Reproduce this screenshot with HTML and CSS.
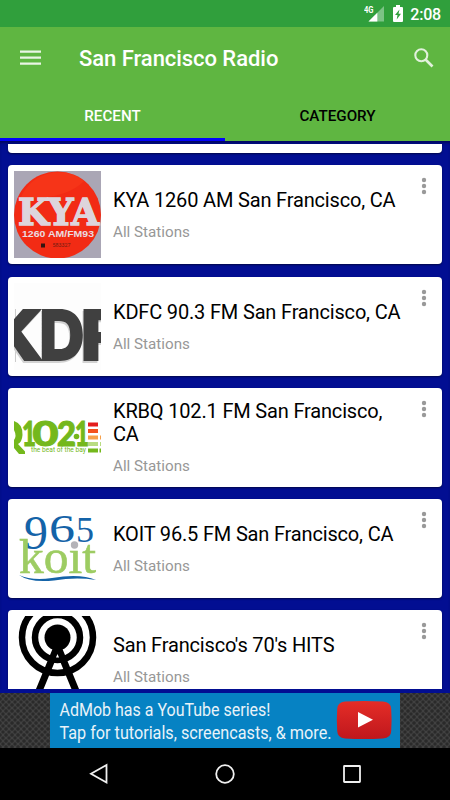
FILE: index.html
```html
<!DOCTYPE html>
<html lang="en">
<head>
    <meta charset="UTF-8">
    <meta name="viewport" content="width=device-width, initial-scale=1.0">
    <title>San Francisco Radio</title>
    <link rel="stylesheet" href="styles.css">
</head>
<body>

    <div class="status-bar">
        <svg class="signal" width="20" height="16" viewBox="0 0 20 16">
            <path d="M20 0V15.500H4.500z" fill="#7cc386"/>
            <path d="M13.300 6.700V15.500H4.500z" fill="#fff"/>
            <path d="M0 0H11V8H0z" fill="#309f3c"/>
            <text x="0" y="7" textLength="9.500" lengthAdjust="spacingAndGlyphs" class="network">4G</text>
        </svg>
        <svg class="battery" width="10" height="17" viewBox="0 0 10 17">
            <path d="M3 0h4v2h2q1 0 1 1v13q0 1-1 1H1q-1 0-1-1V3q0-1 1-1h2z" fill="#fff"/>
            <path d="M6.500 4.500L2 10h2.500l-.8 4.500L8 8.800H5.500z" fill="#309f3c"/>
        </svg>
        <span class="clock">2:08</span>
    </div>

    <header class="app-bar">
        <div class="toolbar">
            <svg class="menu-icon" width="22" height="16" viewBox="0 0 22 16">
                <path d="M0 1.700h21M0 7.700h21M0 13.700h21" stroke="#e9f5e4" stroke-width="2.200"/>
            </svg>
            <h1>San Francisco Radio</h1>
            <svg class="search-icon" width="20" height="20" viewBox="0 0 20 20">
                <circle cx="7.300" cy="7.300" r="6" fill="none" stroke="#e2f1dc" stroke-width="2.100"/>
                <path d="M11.500 11.500l7 7" stroke="#e2f1dc" stroke-width="2.600"/>
            </svg>
        </div>
        <nav class="tabs">
            <div class="tab active">RECENT</div>
            <div class="tab">CATEGORY</div>
        </nav>
    </header>

    <main class="stations">
        <div class="card card-end"></div>

        <div class="card">
            <svg class="logo" viewBox="0 0 87 87">
                <rect width="87" height="87" fill="#aaa6b5"/>
                <circle cx="43.500" cy="44" r="43.500" fill="#f22b14"/>
                <path d="M7 26A41 41 0 0 1 70 10Q50 30 7 26z" fill="#f83a1b" opacity=".6"/>
                <text x="4" y="54" textLength="81" lengthAdjust="spacingAndGlyphs" class="kya">KYA</text>
                <text x="8" y="66" textLength="72" lengthAdjust="spacingAndGlyphs" class="kya-sub">1260 AM/FM93</text>
                <rect x="27" y="72.500" width="4" height="4" fill="#331410"/>
                <text x="38.500" y="76" textLength="18" lengthAdjust="spacingAndGlyphs" class="kya-num">583327</text>
            </svg>
            <div class="info">
                <h2>KYA 1260 AM San Francisco, CA</h2>
                <p>All Stations</p>
            </div>
            <svg class="more" width="6" height="18" viewBox="0 0 6 18"><circle cx="3" cy="3" r="2.200"/><circle cx="3" cy="9" r="2.200"/><circle cx="3" cy="15" r="2.200"/></svg>
        </div>

        <div class="card">
            <svg class="logo" viewBox="0 0 87 87">
                <rect width="87" height="87" fill="#fdfdfd"/>
                <path d="M1.500 26V79" stroke="#ccc"/>
                <g class="kdf">
                    <text x="-31" y="77.500" textLength="62" lengthAdjust="spacingAndGlyphs">K</text>
                    <text x="25" y="77.500" textLength="46" lengthAdjust="spacingAndGlyphs">D</text>
                    <text x="66" y="77.500" textLength="44" lengthAdjust="spacingAndGlyphs">F</text>
                </g>
            </svg>
            <div class="info">
                <h2>KDFC 90.3 FM San Francisco, CA</h2>
                <p>All Stations</p>
            </div>
            <svg class="more" width="6" height="18" viewBox="0 0 6 18"><circle cx="3" cy="3" r="2.200"/><circle cx="3" cy="9" r="2.200"/><circle cx="3" cy="15" r="2.200"/></svg>
        </div>

        <div class="card">
            <svg class="logo" viewBox="0 0 87 87">
                <path d="M0 27Q9 30 8.500 41Q8 48 4 50L11 57.500V60H5L0 54V46Q3 42 0 36z" fill="#74b81c"/>
                <g class="q102">
                    <text x="8" y="52" textLength="14" lengthAdjust="spacingAndGlyphs">1</text>
                    <text x="18.500" y="52" textLength="26" lengthAdjust="spacingAndGlyphs">0</text>
                    <text x="43" y="52" textLength="19" lengthAdjust="spacingAndGlyphs">2</text>
                    <text x="61" y="52" textLength="14" lengthAdjust="spacingAndGlyphs">1</text>
                </g>
                <circle cx="62.500" cy="42.500" r="2.800" fill="#74b81c"/>
                <text x="17" y="58" textLength="55" lengthAdjust="spacingAndGlyphs" class="q102-sub">the beat of the bay</text>
                <rect x="74" y="28.500" width="10" height="4" fill="#e41e1e"/>
                <rect x="74" y="35" width="10" height="4" fill="#f4511e"/>
                <rect x="74" y="41.500" width="10" height="4" fill="#f7a04b"/>
                <rect x="74" y="48" width="10" height="4" fill="#b9dc82"/>
                <rect x="74" y="54.500" width="10" height="4" fill="#74b81c"/>
                <path d="M86 41.500h1v4h-1z" fill="#f7a04b"/>
                <path d="M86 48h1v4h-1z" fill="#b9dc82"/>
                <path d="M85.500 54.500H87v4h-1.500z" fill="#74b81c"/>
            </svg>
            <div class="info">
                <h2>KRBQ 102.1 FM San Francisco, CA</h2>
                <p>All Stations</p>
            </div>
            <svg class="more" width="6" height="18" viewBox="0 0 6 18"><circle cx="3" cy="3" r="2.200"/><circle cx="3" cy="9" r="2.200"/><circle cx="3" cy="15" r="2.200"/></svg>
        </div>

        <div class="card">
            <svg class="logo" viewBox="0 0 87 87">
                <g class="koit-num">
                    <text x="10" y="44" class="nine">9</text>
                    <text x="35" y="36.500" textLength="26" lengthAdjust="spacingAndGlyphs">6</text>
                    <text x="62" y="36.500" class="five">5</text>
                </g>
                <text x="5" y="68" textLength="77" lengthAdjust="spacingAndGlyphs" class="koit">koıt</text>
                <circle cx="60.500" cy="40" r="3.700" fill="#b4b3b8"/>
                <path d="M5 70Q18 76 38 73Q66 68 82 75Q62 72 40 75.500Q16 78 5 70z" fill="#1463a8"/>
            </svg>
            <div class="info">
                <h2>KOIT 96.5 FM San Francisco, CA</h2>
                <p>All Stations</p>
            </div>
            <svg class="more" width="6" height="18" viewBox="0 0 6 18"><circle cx="3" cy="3" r="2.200"/><circle cx="3" cy="9" r="2.200"/><circle cx="3" cy="15" r="2.200"/></svg>
        </div>

        <div class="card">
            <svg class="logo" viewBox="0 0 87 87">
                <g fill="none" stroke="#000" stroke-width="6.500">
                    <circle cx="43.500" cy="21.500" r="35.500"/>
                    <circle cx="43.500" cy="21.500" r="22.500"/>
                    <path d="M43.500 30L20 87M43.500 30L67 87" stroke-width="7"/>
                </g>
                <path d="M43.500 38L45 41.500H42z" fill="#fff"/>
                <circle cx="43.500" cy="21.500" r="13" fill="#000"/>
            </svg>
            <div class="info">
                <h2>San Francisco's 70's HITS</h2>
                <p>All Stations</p>
            </div>
            <svg class="more" width="6" height="18" viewBox="0 0 6 18"><circle cx="3" cy="3" r="2.200"/><circle cx="3" cy="9" r="2.200"/><circle cx="3" cy="15" r="2.200"/></svg>
        </div>
    </main>

    <div class="ad">
        <div class="ad-banner">
            <svg width="350" height="55" viewBox="0 0 350 55">
                <defs>
                    <linearGradient id="play" x1="0" y1="0" x2="0" y2="1">
                        <stop offset="0" stop-color="#e52d27"/>
                        <stop offset="1" stop-color="#bf171d"/>
                    </linearGradient>
                </defs>
                <text x="9.500" y="23" textLength="211" lengthAdjust="spacingAndGlyphs">AdMob has a YouTube series!</text>
                <text x="9.500" y="46" textLength="272" lengthAdjust="spacingAndGlyphs">Tap for tutorials, screencasts, &amp; more.</text>
                <path d="M295 8.500Q314 7.300 333 8.500Q341 9 341.200 16Q342 27 341.200 38Q341 45 333 45.500Q314 46.700 295 45.500Q287.500 45 287.200 38Q286.400 27 287.200 16Q287.500 9 295 8.500z" fill="url(#play)"/>
                <path d="M308 19L323 26.800L308 34.500z" fill="#fff"/>
            </svg>
        </div>
    </div>

    <footer class="nav-bar">
        <svg width="20" height="22" viewBox="0 0 20 22"><path d="M18.500 2V19.500L3 10.800z"/></svg>
        <svg width="20" height="22" viewBox="0 0 20 22"><circle cx="10" cy="11" r="8.800"/></svg>
        <svg width="20" height="22" viewBox="0 0 20 22"><rect x="2" y="3" width="16" height="16" rx=".5"/></svg>
    </footer>

</body>
</html>
```

FILE: styles.css
```css
* {
    box-sizing: border-box;
    margin: 0;
    padding: 0;
}
body {
    width: 450px;
    height: 800px;
    display: flex;
    flex-direction: column;
    overflow: hidden;
    font-family: Roboto, sans-serif;
    background: #020e92;
}
svg {
    display: block;
    flex-shrink: 0;
}

/* Status bar */
.status-bar {
    height: 27px;
    flex-shrink: 0;
    display: flex;
    justify-content: flex-end;
    align-items: center;
    padding-right: 9px;
    background: #309f3c;
    color: #fff;
}
.network {
    font-size: 9px;
    font-weight: 700;
    fill: #fff;
}
.battery {
    margin: 0 7px 0 9px;
}
.clock {
    font-size: 16px;
    font-weight: 500;
    line-height: 20px;
    letter-spacing: -0.2px;
    padding-top: 2px;
}

/* Header */
.app-bar {
    height: 114px;
    flex-shrink: 0;
    background: #5fb641;
}
.toolbar {
    height: 63px;
    display: flex;
    align-items: center;
    padding: 0 16px 0 20px;
}
.toolbar h1 {
    flex: 1;
    margin-left: 37px;
    font-size: 22px;
    font-weight: 500;
    letter-spacing: -0.05px;
    color: #fff;
}
.menu-icon {
    margin-bottom: 2px;
}
.search-icon {
    margin-bottom: 2px;
}
.tabs {
    height: 51px;
    display: flex;
}
.tab {
    flex: 1;
    text-align: center;
    font-size: 15.200px;
    font-weight: 500;
    line-height: 52px;
    color: #000;
}
.tab.active {
    color: #fff;
    border-bottom: 3px solid #0202fa;
}

/* Station list */
.stations {
    height: 549px;
    flex-shrink: 0;
    overflow: hidden;
    display: flex;
    flex-direction: column;
    gap: 12.250px;
    padding: 3px 8px 0;
    border-bottom: 1px solid #020e92;
    box-shadow: inset 0 3px 3px -1px #02095e;
}
.card {
    height: 99px;
    flex-shrink: 0;
    display: flex;
    padding: 6px;
    background: #fff;
    border-radius: 4px;
    box-shadow: 0 1px 2px rgba(0, 0, 0, 0.5);
}
.card-end {
    height: 9px;
    padding: 0;
    border-radius: 0 0 4px 4px;
}
.logo {
    width: 87px;
    height: 87px;
    overflow: hidden;
}
.info {
    flex: 1;
    align-self: center;
    padding: 1px 15px 0 12px;
}
.info h2 {
    font-size: 20px;
    font-weight: 400;
    line-height: 23px;
    letter-spacing: -0.170px;
    color: #000;
}
.info p {
    margin-top: 11px;
    font-size: 15.200px;
    line-height: 18px;
    color: #979797;
}
.more {
    margin: 6px 9px 0 0;
    fill: #999;
}

/* Logos */
.kya {
    font-family: "DejaVu Serif", serif;
    font-size: 37px;
    font-weight: 700;
    fill: #ddd5dc;
    stroke: #ddd5dc;
    stroke-width: 1.500px;
}
.kya-sub {
    font-family: "Liberation Sans", sans-serif;
    font-size: 9.500px;
    font-weight: 700;
    fill: #eadce0;
}
.kya-num {
    font-size: 5.500px;
    fill: #701b12;
}
.kdf {
    font-family: Inter, sans-serif;
    font-size: 71px;
    font-weight: 900;
    fill: #404040;
    filter: drop-shadow(-1px 2px 0 #d2d2d2);
}
.q102 {
    font-family: Lato, sans-serif;
    font-size: 34px;
    font-weight: 900;
    fill: #74b81c;
    stroke: #74b81c;
    stroke-width: 1px;
}
.q102-sub {
    font-size: 6.500px;
    fill: #74b81c;
}
.koit-num {
    font-family: "Liberation Serif", serif;
    font-size: 41px;
    fill: #1463a8;
}
.nine {
    font-size: 48px;
}
.five {
    font-size: 36px;
}
.koit {
    font-family: "Liberation Serif", serif;
    font-size: 48px;
    fill: #9dcc62;
    stroke: #9dcc62;
    stroke-width: 0.600px;
}

/* Ad */
.ad {
    height: 58px;
    flex-shrink: 0;
    display: flex;
    justify-content: center;
    border-top: 3px solid #020e92;
    background-color: #383838;
    background-image: radial-gradient(#2a2a2a 1.200px, transparent 2px), radial-gradient(#2a2a2a 1.200px, #414141 2.400px);
    background-size: 6px 6px;
    background-position: 0 0, 3px 3px;
}
.ad-banner {
    width: 350px;
    background: #0682c3;
}
.ad-banner text {
    font-size: 18px;
    fill: #e9f3f9;
}

/* Navigation bar */
.nav-bar {
    height: 52px;
    flex-shrink: 0;
    display: flex;
    justify-content: space-between;
    align-items: center;
    padding: 0 88px;
    background: #000;
}
.nav-bar svg {
    fill: none;
    stroke: #f0f0f0;
    stroke-width: 1.800px;
}
```
